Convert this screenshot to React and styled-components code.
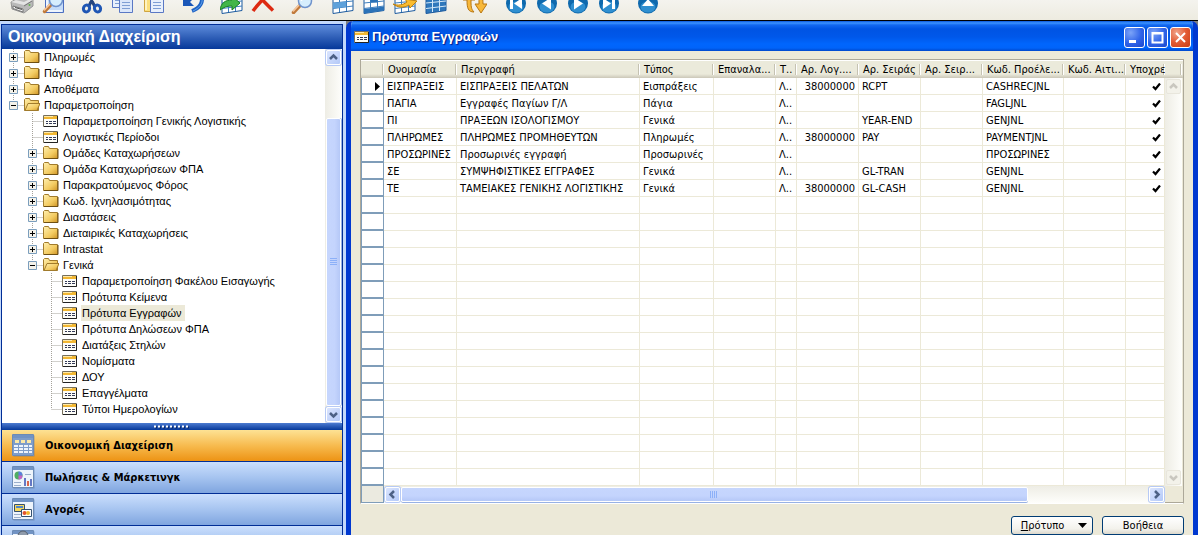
import { useState } from "react"
import styled, { createGlobalStyle } from "styled-components"

const GlobalStyle = createGlobalStyle`
  * {
    box-sizing: border-box;
  }
  body {
    margin: 0;
    overflow: hidden;
    background: #ece9d8;
    color: #000;
    font: 11px/16px "DejaVu Sans Condensed", "DejaVu Sans", Tahoma, sans-serif;
  }
  button {
    font: inherit;
    color: inherit;
    padding: 0;
  }
  svg {
    display: block;
    flex: none;
  }
`

/* ---------- page ---------- */

const Page = styled.div`
  display: flex;
  flex-direction: column;
  height: 100vh;
  overflow: hidden;
`
const Toolbar = styled.div`
  display: flex;
  align-items: flex-end;
  flex: none;
  height: 21px;
  padding: 0 6px 6px;
  overflow: hidden;
  background: linear-gradient(#f4f3ee, #edebe0);
  border-bottom: 1px solid #000;
`
const ToolGroup = styled.div`
  display: flex;
  margin-right: ${(p) => (p.$wide ? "10px" : "8px")};
`
const ToolButton = styled.button`
  display: flex;
  justify-content: center;
  width: 31px;
  height: 24px;
  border: 0;
  background: none;
`
const Workspace = styled.div`
  display: flex;
  align-items: stretch;
  flex: 1;
  min-height: 0;
  background: #808080;
`

/* ---------- sidebar ---------- */

const Sidebar = styled.aside`
  flex: none;
  width: 346px;
  padding: 3px 3px 0 1px;
  background: #c3d8fb;
`
const Panel = styled.div`
  border: 1px solid #002d96;
`
const PanelTitle = styled.h1`
  margin: 0;
  padding: 0 6px;
  font: bold 16px/24px "Liberation Sans", Arial, sans-serif;
  color: #fff;
  background: linear-gradient(#5d8bdb, #2c5cb5 55%, #06389a);
`
const TreeArea = styled.div`
  display: flex;
  background: #fff;
`
const Tree = styled.ul`
  flex: 1;
  min-width: 0;
  margin: 0;
  padding: 0 0 6px 2px;
  list-style: none;
  font-family: "Liberation Sans", Arial, sans-serif;
`
const TreeRow = styled.li`
  display: flex;
  align-items: center;
  height: 16px;
  padding-left: ${(p) => p.$level * 19}px;
  white-space: nowrap;
`
const TreeLabel = styled.span`
  margin-left: 3px;
  padding: 0 3px 0 1px;
  background: ${(p) => (p.$selected ? "#ece9d8" : "transparent")};
`
const Splitter = styled.div`
  display: flex;
  justify-content: center;
  height: 7px;
  padding-top: 2px;
  background: linear-gradient(#4c7bd0, #06389a);
`
const NavButton = styled.button`
  display: flex;
  align-items: center;
  gap: 10px;
  width: 100%;
  height: 32px;
  padding-left: 10px;
  border: 0;
  border-bottom: 1px solid #002d96;
  text-align: left;
  font-weight: bold;
  background: ${(p) =>
    p.$active
      ? "linear-gradient(#fde294, #f7bb4f 50%, #ed9314)"
      : "linear-gradient(#cbdffd, #a6c4f0 50%, #7fa5df)"};
`

/* ---------- scroll bars ---------- */

const ScrollBar = styled.div`
  display: flex;
  flex-direction: ${(p) => (p.$vertical ? "column" : "row")};
  flex: ${(p) => (p.$grow ? "1" : "none")};
  ${(p) => (p.$vertical ? "width: 17px;" : "height: 17px;")}
  padding: 1px;
  gap: 1px;
  background: ${(p) =>
    p.$vertical
      ? "linear-gradient(90deg, #eeede5, #fefefb)"
      : "linear-gradient(#eeede5, #fefefb)"};
`
const ScrollButton = styled.button`
  display: flex;
  align-items: center;
  justify-content: center;
  flex: none;
  width: 15px;
  height: 15px;
  border: 1px solid ${(p) => (p.$off ? "#e8e6dc" : "#fff")};
  border-radius: 2px;
  background: ${(p) =>
    p.$off ? "#f3f2ea" : "linear-gradient(135deg, #dbe5fe, #b4c9f8)"};
  box-shadow: ${(p) => (p.$off ? "none" : "0 0 0 1px #b7caf5")};
`
const Track = styled.div`
  flex: ${(p) => p.$size};
`
const Thumb = styled.div`
  display: flex;
  align-items: center;
  justify-content: center;
  flex: ${(p) => p.$size};
  border: 1px solid #fff;
  border-radius: 2px;
  background: linear-gradient(
    ${(p) => (p.$vertical ? "90deg" : "180deg")},
    #c6d6fd,
    #c4d4fd 60%,
    #b5c8f7
  );
  box-shadow: ${(p) => (p.$vertical ? "1px 0 0 #98b1e4" : "0 1px 0 #98b1e4")};
`

/* ---------- window ---------- */

const Window = styled.section`
  display: flex;
  flex-direction: column;
  flex: 1;
  min-width: 0;
  border: solid #0038d0;
  border-width: 0 5px;
  border-radius: 7px 7px 0 0;
  background: #ece9d8;
  overflow: hidden;
`
const TitleBar = styled.header`
  display: flex;
  align-items: center;
  flex: none;
  height: 30px;
  margin: 0 -5px;
  padding: 2px 7px 0 8px;
  background: linear-gradient(
    #0a55d8 0,
    #3b93ff 2px,
    #1268f0 4px,
    #0054e3 8px,
    #0058ea 16px,
    #0066fd 23px,
    #0064fa 27px,
    #0048cc 30px
  );
`
const WindowTitle = styled.h2`
  flex: 1;
  margin: 0 0 0 2px;
  font: bold 13px/20px "Liberation Sans", Arial, sans-serif;
  color: #fff;
  text-shadow: 1px 1px 1px #0a1883;
`
const WindowButton = styled.button`
  width: 21px;
  height: 21px;
  margin-left: 2px;
  border: 1px solid #fff;
  border-radius: 3px;
  background: ${(p) =>
    p.$close
      ? "radial-gradient(circle at 30% 25%, #f0a58c, #e25a33 50%, #c93c14)"
      : "radial-gradient(circle at 30% 25%, #7ba3f8, #2f63e8 55%, #1c48cc)"};
`
const Content = styled.div`
  padding: 8px 9px;
`
const Grid = styled.div`
  border: 1px solid #aca899;
  border-bottom-color: #fff;
`
const GridMain = styled.div`
  display: flex;
`
const Table = styled.table`
  flex: 1;
  width: 0;
  table-layout: fixed;
  border-collapse: separate;
  border-spacing: 0;
  background: #fff;
`
const HeadCell = styled.th`
  height: 18px;
  padding: 2px 0 0 4px;
  overflow: hidden;
  white-space: nowrap;
  text-align: left;
  font-weight: normal;
  line-height: 14px;
  background: linear-gradient(90deg, #c5c2b2 1px, #fff 1px) right 4px / 2px 11px
      no-repeat,
    linear-gradient(#fff 1px, #ebeadb 1px, #ebeadb 14px, #cbc7b8);
`
const Cell = styled.td`
  height: 17px;
  padding: 2px 3px 0;
  overflow: hidden;
  white-space: nowrap;
  text-align: ${(p) => p.$align || "left"};
  line-height: 14px;
  border: solid #ece9d8;
  border-width: 0 1px 1px 0;
`
const RowHead = styled.th`
  height: 17px;
  padding: 1px 0 0 12px;
  border: solid #7f9db9;
  border-width: 0 1px 2px;
`
const SideColumn = styled.div`
  display: flex;
  flex-direction: column;
  width: 18px;
`
const SideHead = styled.div`
  height: 18px;
  background: linear-gradient(90deg, #c5c2b2 1px, #fff 1px) 15px 4px / 2px 11px
      no-repeat,
    linear-gradient(#fff 1px, #ebeadb 1px, #ebeadb 14px, #cbc7b8);
`
const GridBottom = styled.div`
  display: flex;
`
const Stub = styled.div`
  width: 23px;
  border: solid #7f9db9;
  border-width: 0 1px 1px;
  background: #ebeae0;
`
const Corner = styled.div`
  width: 18px;
  background: #ece9d8;
  border-bottom: 1px solid #aca899;
`
const Actions = styled.div`
  display: flex;
  justify-content: flex-end;
  gap: 9px;
  margin-top: 12px;
`
const ActionButton = styled.button`
  display: flex;
  align-items: center;
  justify-content: center;
  gap: 14px;
  width: 82px;
  height: 19px;
  padding-left: ${(p) => (p.$menu ? "4px" : "0")};
  border: 1px solid #003c74;
  border-radius: 3px;
  line-height: 16px;
  background: linear-gradient(#fff, #f3f2ec 70%, #dcd8cc);
`
const CheckMark = styled.svg`
  margin-left: auto;
`

/* ---------- data ---------- */

const TREE = [
  { level: 0, kind: "closed", text: "Πληρωμές" },
  { level: 0, kind: "closed", text: "Πάγια" },
  { level: 0, kind: "closed", text: "Αποθέματα" },
  { level: 0, kind: "open", text: "Παραμετροποίηση", last: true },
  { level: 1, kind: "form", text: "Παραμετροποίηση Γενικής Λογιστικής" },
  { level: 1, kind: "form", text: "Λογιστικές Περίοδοι" },
  { level: 1, kind: "closed", text: "Ομάδες Καταχωρήσεων" },
  { level: 1, kind: "closed", text: "Ομάδα Καταχωρήσεων ΦΠΑ" },
  { level: 1, kind: "closed", text: "Παρακρατούμενος Φόρος" },
  { level: 1, kind: "closed", text: "Κωδ. Ιχνηλασιμότητας" },
  { level: 1, kind: "closed", text: "Διαστάσεις" },
  { level: 1, kind: "closed", text: "Διεταιρικές Καταχωρήσεις" },
  { level: 1, kind: "closed", text: "Intrastat" },
  { level: 1, kind: "open", text: "Γενικά", last: true },
  { level: 2, kind: "form", text: "Παραμετροποίηση Φακέλου Εισαγωγής" },
  { level: 2, kind: "form", text: "Πρότυπα Κείμενα" },
  { level: 2, kind: "form", text: "Πρότυπα Εγγραφών" },
  { level: 2, kind: "form", text: "Πρότυπα Δηλώσεων ΦΠΑ" },
  { level: 2, kind: "form", text: "Διατάξεις Στηλών" },
  { level: 2, kind: "form", text: "Νομίσματα" },
  { level: 2, kind: "form", text: "ΔΟΥ" },
  { level: 2, kind: "form", text: "Επαγγέλματα" },
  { level: 2, kind: "form", text: "Τύποι Ημερολογίων", last: true },
]

const COLUMNS = [
  { key: "name", title: "Ονομασία", width: 73 },
  { key: "description", title: "Περιγραφή" },
  { key: "type", title: "Τύπος", width: 74 },
  { key: "recurring", title: "Επαναλα...", width: 62 },
  { key: "t", title: "Τ..", width: 21 },
  { key: "account", title: "Αρ. Λογ....", width: 62, align: "right" },
  { key: "series", title: "Αρ. Σειράς", width: 62 },
  { key: "postSeries", title: "Αρ. Σειρ...", width: 62 },
  { key: "source", title: "Κωδ. Προέλε...", width: 81 },
  { key: "reason", title: "Κωδ. Αιτι...", width: 62 },
  { key: "force", title: "Υποχρε", width: 39, align: "right" },
]

const ENTRIES = [
  { name: "ΕΙΣΠΡΑΞΕΙΣ", description: "ΕΙΣΠΡΑΞΕΙΣ ΠΕΛΑΤΩΝ", type: "Εισπράξεις", account: "38000000", series: "RCPT", source: "CASHRECJNL" },
  { name: "ΠΑΓΙΑ", description: "Εγγραφές Παγίων Γ/Λ", type: "Πάγια", source: "FAGLJNL" },
  { name: "ΠΙ", description: "ΠΡΑΞΕΩΝ ΙΣΟΛΟΓΙΣΜΟΥ", type: "Γενικά", series: "YEAR-END", source: "GENJNL" },
  { name: "ΠΛΗΡΩΜΕΣ", description: "ΠΛΗΡΩΜΕΣ ΠΡΟΜΗΘΕΥΤΩΝ", type: "Πληρωμές", account: "38000000", series: "PAY", source: "PAYMENTJNL" },
  { name: "ΠΡΟΣΩΡΙΝΕΣ", description: "Προσωρινές εγγραφή", type: "Προσωρινές", source: "ΠΡΟΣΩΡΙΝΕΣ" },
  { name: "ΣΕ", description: "ΣΥΜΨΗΦΙΣΤΙΚΕΣ ΕΓΓΡΑΦΕΣ", type: "Γενικά", series: "GL-TRAN", source: "GENJNL" },
  { name: "ΤΕ", description: "ΤΑΜΕΙΑΚΕΣ ΓΕΝΙΚΗΣ ΛΟΓΙΣΤΙΚΗΣ", type: "Γενικά", account: "38000000", series: "GL-CASH", source: "GENJNL" },
]

const ROW_COUNT = 24

/* ---------- icons ---------- */

const Sheet = ({ x = 0, y = 0, fill = "#e8f0fc" }) => (
  <g transform={`translate(${x} ${y})`}>
    <path d="M.5.5h13v17H.5z" fill={fill} stroke="#5a78c4" />
    <path d="M3 4.500h8M3 7.500h8M3 10.500h8M3 13.500h8" stroke="#7f9fd4" />
  </g>
)

const Lens = ({ x = 0, y = 0 }) => (
  <g transform={`translate(${x} ${y})`}>
    <path d="M1.500 18.500 8 11.500" stroke="#c0793a" strokeWidth="3.500" strokeLinecap="round" />
    <path d="M1 17.500 7 11" stroke="#f8c79c" strokeWidth="1.500" />
    <circle cx="13" cy="7" r="6.500" fill="#d6eefd" stroke="#6f93cc" strokeWidth="1.500" />
    <path d="M9.500 7a4 4 0 0 1 3.500-4" fill="none" stroke="#fff" strokeWidth="1.500" />
  </g>
)

const Cells = ({ dark }) => (
  <g>
    <path d="M2 4 22 2v18.500L2 23.500z" fill={dark ? "#2f78bc" : "#fff"} stroke="#1c5a9e" />
    <path d="M2 4 22 2v4L2 8z" fill="#1f6cb5" />
    <path
      d="M2 13 22 11M2 18.500 22 16M8.500 4v18M15.500 3v18"
      stroke={dark ? "#d4e8f8" : "#3f7fbd"}
    />
  </g>
)

const Ball = ({ children }) => (
  <g>
    <circle cx="12" cy="13.500" r="10" fill="#0f69ad" />
    <ellipse cx="12" cy="17" rx="7.500" ry="5.500" fill="#2f8fd0" />
    <g fill="#fff">{children}</g>
  </g>
)

const TOOL_ICONS = {
  print: (
    <g>
      <path d="M7 2 18 1l2 9-12 2z" fill="#fafafa" stroke="#999" />
      <path d="M1 12 8 8l15 2v6l-9 7L2 19z" fill="#b9b9b9" stroke="#959595" />
      <path d="m1 12 13 3 9-5-3-1-6 3-8-2z" fill="#e4e4e4" />
      <path d="m3 16 10 3v3L3 18.500zM14 16l8-5" fill="#f7f7f7" stroke="#777" />
      <path d="m5 17.500 7 2" stroke="#555" />
      <circle cx="19.500" cy="15" r="1" fill="#5fb34b" />
    </g>
  ),
  preview: (
    <g>
      <path d="M4.500.500h18v22h-18z" fill="#c5dcf8" stroke="#4d6fc0" />
      <path d="M6 21h15M6 2v19" stroke="#eef5fe" strokeWidth="2" />
      <Lens x={2} y={3} />
    </g>
  ),
  cut: (
    <g fill="none" stroke="#1f56b4" strokeWidth="3">
      <path d="M7 1l8 16M16 1 9 16" stroke="#25457e" strokeWidth="3" />
      <ellipse cx="6.500" cy="18.500" rx="3" ry="3.500" transform="rotate(25 6.500 18.500)" />
      <ellipse cx="17.500" cy="18.500" rx="3" ry="3.500" transform="rotate(-25 17.500 18.500)" />
    </g>
  ),
  copy: (
    <g>
      <Sheet x={1} y={0} />
      <Sheet x={8} y={5} fill="#dbe7fa" />
    </g>
  ),
  paste: (
    <g>
      <path d="M2.500 1.500h15v20h-15z" fill="#fbdf7c" stroke="#d0a540" />
      <path d="M4 3v17" stroke="#fff3c0" strokeWidth="2" />
      <Sheet x={8} y={5} />
    </g>
  ),
  undo: (
    <g>
      <path d="M20 4c3 8-1 14-9 17" fill="none" stroke="#1e62c4" strokeWidth="4" />
      <path d="M2 5v11h11l-4-4 4-4z" fill="#1a57b8" />
      <path d="M21 8c1 6-3 10-9 13" fill="none" stroke="#63a5ef" />
    </g>
  ),
  insert: (
    <g>
      <Cells />
      <path d="M0 20c1-7 5-10 12-10V6l8 7-8 7v-4c-5 0-8 1-12 4z" fill="#42b649" stroke="#187f25" />
    </g>
  ),
  remove: (
    <path d="M2 0c5 5 12 13 20 20.500M21 0C14 7 7 14 2 21" fill="none" stroke="#dd2a12" strokeWidth="3.500" />
  ),
  find: <Lens x={2} y={4} />,
  cells: (
    <g>
      <Cells />
      <path d="M2 13l13-1.500V17L2 18.500z" fill="#5ea1da" />
    </g>
  ),
  cellsBlue: (
    <g>
      <Cells />
      <path d="M2 19 22 16.500v4L2 23.500zM8.500 7.500h7v5h-7z" fill="#2a72b8" />
    </g>
  ),
  cellsArrow: (
    <g>
      <Cells />
      <path d="M0 14c5 2 10 1 14-2l-2-3 12 2-7 7-1-3c-5 3-11 3-16-1z" fill="#fbbd2f" stroke="#bd8110" />
    </g>
  ),
  cellsDark: <Cells dark />,
  refresh: (
    <g fill="#f8b83a" stroke="#b87712">
      <path d="M11 22c-6 0-7-4-7-12H0l6-7 6 7H8c0 6 0 9 3 12z" />
      <path d="M14 3c5 0 6 4 6 11h4l-6 9-6-9h4c0-5 0-8-2-11z" />
    </g>
  ),
  first: <Ball><path d="M6 8h3v11H6zM18 8v11l-8-5.500z" /></Ball>,
  previous: <Ball><path d="M16 7.500v12l-9-6z" /></Ball>,
  next: <Ball><path d="M8 7.500v12l9-6z" /></Ball>,
  last: <Ball><path d="M15 8h3v11h-3zM6 8v11l8-5.500z" /></Ball>,
  up: <Ball><path d="m12 9 6 7H6z" /></Ball>,
}

const TOOLS = [
  { items: ["print", "preview"] },
  { items: ["cut", "copy", "paste"] },
  { items: ["undo"] },
  { items: ["insert", "remove"] },
  { items: ["find"], wide: true },
  { items: ["cells", "cellsBlue", "cellsArrow", "cellsDark"] },
  { items: ["refresh"], wide: true },
  { items: ["first", "previous", "next", "last"] },
  { items: ["up"] },
]

/* dotted branch of the tree, with its plus or minus box */
const Branch = ({ kind, last }) => (
  <svg width="20" height="16">
    <path
      d={`M9.500 0V${last ? 8 : 16}M9.500 8.500H20`}
      stroke="#a5a29a"
      strokeDasharray="1 1"
      fill="none"
    />
    {kind !== "form" && (
      <g>
        <path d="M5.500 4.500h8v8h-8z" fill="#f4f2ea" stroke="#7b9ebd" />
        <path d={kind === "closed" ? "M7 8.500h5M9.500 6v5" : "M7 8.500h5"} stroke="#000" />
      </g>
    )}
  </svg>
)

const FormIcon = () => (
  <svg width="16" height="14" viewBox="0 0 16 14">
    <path d="M.5 1.500h14v11H.5z" fill="#fdfdf8" stroke="#77705c" />
    <path d="M1 2h13v3H1z" fill="#f2b733" />
    <path d="M1 2.500h9" stroke="#fde9a8" />
    <path d="M1 12.500h13.500V2" fill="none" stroke="#222" />
    <path d="M3 7.500h2M6 7.500h3M10 7.500h3M3 9.500h2M6 9.500h3M10 9.500h3" stroke="#333a58" />
  </svg>
)

const FolderIcon = ({ open }) => (
  <svg width="16" height="14" viewBox="0 0 16 14">
    <defs>
      <linearGradient id="folder" x1="0" y1="0" x2="1" y2="1">
        <stop offset="0" stopColor="#fff0b0" />
        <stop offset=".6" stopColor="#f3cb61" />
        <stop offset="1" stopColor="#cf9526" />
      </linearGradient>
    </defs>
    <path d="M.5 12.500v-11l1-1h4l1 2h8v10z" fill="url(#folder)" stroke="#a17b2c" />
    {open ? (
      <path d="m1 12.500 3-7h12l-3 7z" fill="url(#folder)" stroke="#a17b2c" />
    ) : (
      <path d="M1 12.500h14V3" fill="none" stroke="#6e4f12" />
    )}
  </svg>
)

const CHEVRONS = {
  up: "M1 6 4.500 2.500 8 6",
  down: "M1 3 4.500 6.500 8 3",
  left: "M6 1 2.500 4.500 6 8",
  right: "M3 1 6.500 4.500 3 8",
}

const Chevron = ({ dir, off }) => (
  <svg width="9" height="9">
    <path d={CHEVRONS[dir]} fill="none" stroke={off ? "#c9c7bf" : "#4d6185"} strokeWidth="2.500" />
  </svg>
)

const Grip = ({ vertical }) => (
  <svg width="8" height="8">
    <path
      d={vertical ? "M0 .5h7M0 2.500h7M0 4.500h7M0 6.500h7" : "M.5 0v7M2.500 0v7M4.500 0v7M6.500 0v7"}
      stroke="#8cb0f8"
    />
  </svg>
)

const NavIcon = ({ name }) => (
  <svg width="23" height="23" viewBox="0 0 23 23">
    <path d="M1.500 1.500h21v21h-21z" fill="#54709c" opacity=".5" />
    <path d="M.5.500h21v21H.5z" fill="#eef4fb" stroke="#6b8bb6" />
    <path d="M1 1h20v3H1z" fill="#7193c4" />
    {name === "finance" && (
      <g>
        <path d="M1 4h20v17H1z" fill="#7e9dc9" />
        <path d="M3 6h4v3H3zM9 6h4v3H9zM15 6h4v3h-4z" fill="#fbe9a8" />
        <path d="M2 11h4v2H2zM7 11h4v2H7zM12 11h4v2h-4zM17 11h3v2h-3zM2 14h4v2H2zM7 14h4v2H7zM12 14h4v2h-4zM17 14h3v2h-3zM2 17h4v2H2zM7 17h4v2H7zM12 17h4v2h-4zM17 17h3v2h-3z" fill="#eef4fb" />
      </g>
    )}
    {name === "sales" && (
      <g>
        <circle cx="6.500" cy="9.500" r="4" fill="#4fae62" />
        <path d="M6.500 9.500v-4a4 4 0 0 1 4 4z" fill="#5b7fe0" />
        <path d="M6.500 9.500h4a4 4 0 0 1-4 4z" fill="#c860c8" />
        <path d="M2 16.500h7M2 19.500h7M13 8.500h6" stroke="#9aaecb" />
        <path d="M12 12h2v8h-2zM18 13h2v7h-2z" fill="#6578c4" />
        <path d="M15 15h2v5h-2z" fill="#d8654c" />
      </g>
    )}
    {name === "purchase" && (
      <g>
        <path d="M2 13.500h6M2 16.500h7M2 19.500h7" stroke="#9aaecb" />
        <path d="M2.500 6.500h10v7h-10z" fill="#f6d75b" stroke="#34506f" />
        <path d="M4 8h7v2H4z" fill="#4f86cc" />
        <path d="M9.500 11.500h10v7h-10z" fill="#fff" stroke="#34506f" />
        <circle cx="12.500" cy="15" r="2" fill="#e2542c" />
        <circle cx="16" cy="15" r="2" fill="#f3b62b" />
      </g>
    )}
    {name === "warehouse" && (
      <path d="M6 10V6a5 5 0 0 1 10 0v4z" fill="#8f9bab" stroke="#56606e" />
    )}
  </svg>
)

const NAV = [
  { icon: "finance", text: "Οικονομική Διαχείριση" },
  { icon: "sales", text: "Πωλήσεις & Μάρκετινγκ" },
  { icon: "purchase", text: "Αγορές" },
  { icon: "warehouse", text: "" },
]

const WINDOW_ICONS = {
  minimize: <path d="M4 12h7v3H4z" fill="#fff" />,
  maximize: <path d="M4.500 5h10v9.500h-10zM4 5.500h11" fill="none" stroke="#fff" strokeWidth="2" />,
  close: <path d="m5 5 9 9M14 5l-9 9" stroke="#fff" strokeWidth="2" />,
}

/* ---------- parts ---------- */

const AppToolbar = () => (
  <Toolbar>
    {TOOLS.map((group) => (
      <ToolGroup key={group.items[0]} $wide={group.wide}>
        {group.items.map((name) => (
          <ToolButton key={name} aria-label={name}>
            <svg width="24" height="24">{TOOL_ICONS[name]}</svg>
          </ToolButton>
        ))}
      </ToolGroup>
    ))}
  </Toolbar>
)

const Navigation = () => {
  const [selected, setSelected] = useState("Πρότυπα Εγγραφών")
  const [area, setArea] = useState("finance")

  return (
    <Sidebar>
      <Panel>
        <PanelTitle>Οικονομική Διαχείριση</PanelTitle>
        <TreeArea>
          <Tree>
            {TREE.map((node) => (
              <TreeRow key={node.text} $level={node.level} onClick={() => setSelected(node.text)}>
                <Branch kind={node.kind} last={node.last} />
                {node.kind === "form" ? <FormIcon /> : <FolderIcon open={node.kind === "open"} />}
                <TreeLabel $selected={node.text === selected}>{node.text}</TreeLabel>
              </TreeRow>
            ))}
          </Tree>
          <ScrollBar $vertical>
            <ScrollButton aria-label="up"><Chevron dir="up" /></ScrollButton>
            <Track $size={15} />
            <Thumb $vertical $size={85}><Grip vertical /></Thumb>
            <ScrollButton aria-label="down"><Chevron dir="down" /></ScrollButton>
          </ScrollBar>
        </TreeArea>
        <Splitter>
          <svg width="36" height="4">
            <path d="M1 2.500h35" stroke="#0a2a6c" strokeWidth="2" strokeDasharray="2 2" />
            <path d="M0 1.500h35" stroke="#fff" strokeWidth="2" strokeDasharray="2 2" />
          </svg>
        </Splitter>
        {NAV.map((item) => (
          <NavButton
            key={item.icon}
            aria-label={item.text || item.icon}
            $active={item.icon === area}
            onClick={() => setArea(item.icon)}
          >
            <NavIcon name={item.icon} />
            {item.text}
          </NavButton>
        ))}
      </Panel>
    </Sidebar>
  )
}

const CellContent = ({ column, entry }) => {
  if (column.key === "t") return "Λ.."
  if (column.key === "force") {
    return (
      <CheckMark width="9" height="9">
        <path d="M1 3.500 3.500 6 8 .5" fill="none" stroke="#000" strokeWidth="2.200" />
      </CheckMark>
    )
  }
  return entry[column.key] || null
}

const TemplatesGrid = () => {
  const rows = Array.from({ length: ROW_COUNT }, (_, i) => ENTRIES[i])

  return (
    <Grid>
      <GridMain>
        <Table>
          <colgroup>
            <col width="23" />
            {COLUMNS.map((c) => <col key={c.key} width={c.width} />)}
          </colgroup>
          <thead>
            <tr>
              <HeadCell />
              {COLUMNS.map((c) => <HeadCell key={c.key} scope="col">{c.title}</HeadCell>)}
            </tr>
          </thead>
          <tbody>
            {rows.map((entry, i) => (
              <tr key={i}>
                <RowHead scope="row">
                  {i === 0 && <svg width="6" height="9"><path d="M1 0 6 4.500 1 9z" /></svg>}
                </RowHead>
                {COLUMNS.map((c) => (
                  <Cell key={c.key} $align={c.align}>
                    {entry && <CellContent column={c} entry={entry} />}
                  </Cell>
                ))}
              </tr>
            ))}
          </tbody>
        </Table>
        <SideColumn>
          <SideHead />
          <ScrollBar $vertical $grow>
            <ScrollButton $off disabled aria-label="up"><Chevron dir="up" off /></ScrollButton>
            <Track $size={1} />
            <ScrollButton $off disabled aria-label="down"><Chevron dir="down" off /></ScrollButton>
          </ScrollBar>
        </SideColumn>
      </GridMain>
      <GridBottom>
        <Stub />
        <ScrollBar $grow>
          <ScrollButton aria-label="left"><Chevron dir="left" /></ScrollButton>
          <Thumb $size={84}><Grip /></Thumb>
          <Track $size={16} />
          <ScrollButton aria-label="right"><Chevron dir="right" /></ScrollButton>
        </ScrollBar>
        <Corner />
      </GridBottom>
    </Grid>
  )
}

const App = () => {
  return (
    <Page>
      <GlobalStyle />
      <AppToolbar />
      <Workspace>
        <Navigation />
        <Window>
          <TitleBar>
            <FormIcon />
            <WindowTitle>Πρότυπα Εγγραφών</WindowTitle>
            {Object.keys(WINDOW_ICONS).map((name) => (
              <WindowButton key={name} $close={name === "close"} aria-label={name}>
                <svg width="19" height="19">{WINDOW_ICONS[name]}</svg>
              </WindowButton>
            ))}
          </TitleBar>
          <Content>
            <TemplatesGrid />
            <Actions>
              <ActionButton $menu>
                <span><u>Π</u>ρότυπο</span>
                <svg width="9" height="5"><path d="M0 0h9L4.500 5z" /></svg>
              </ActionButton>
              <ActionButton>Βοήθεια</ActionButton>
            </Actions>
          </Content>
        </Window>
      </Workspace>
    </Page>
  )
}

export default App
